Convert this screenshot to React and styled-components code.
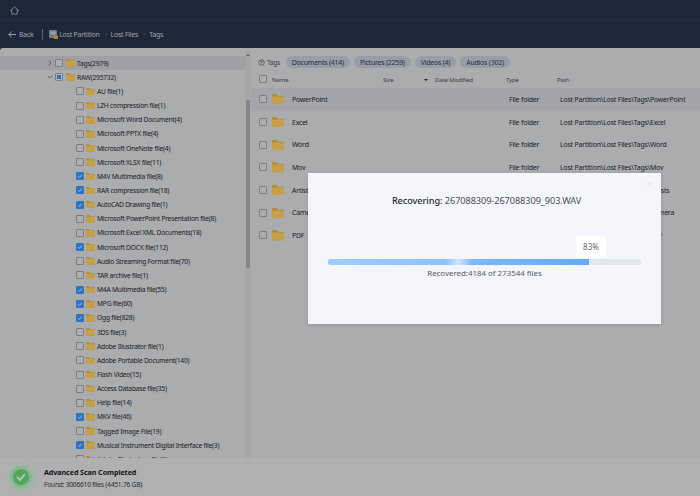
import React from "react";
import styled, { createGlobalStyle } from "styled-components";
import { ChevronDown, ChevronRight, X } from "lucide-react";

const GlobalStyle = createGlobalStyle`
  html, body {
    margin: 0;
    padding: 0;
  }
  body {
    font-family: "Noto Sans", "Open Sans", sans-serif;
    color: #23262e;
    background: #d6d7da;
  }
`;

const Page = styled.div`
  position: relative;
  display: flex;
  flex-direction: column;
  width: 700px;
  height: 496px;
  overflow: hidden;
  background: #263148;
`;

const TopBar = styled.div`
  display: flex;
  align-items: center;
  height: 20px;
  padding-left: 10px;
  border-bottom: 1px solid #2e3a54;
`;

const Crumbs = styled.div`
  display: flex;
  align-items: center;
  height: 27px;
  padding-left: 8px;
  font-size: 7px;
  letter-spacing: -0.25px;
  color: #c4c8d0;
`;

const Back = styled.span`
  display: flex;
  align-items: center;
  gap: 3px;
  padding-right: 8px;
  margin-right: 6px;
  border-right: 1px solid #747c8e;
  height: 11px;
`;

const Crumb = styled.span`
  display: flex;
  align-items: center;
`;

const CrumbArrow = styled.span`
  display: flex;
  padding: 0 2px 0 4px;
  color: #8f96a6;
`;

const Body = styled.div`
  flex: 1;
  display: flex;
  min-height: 0;
  background: #d6d7da;
  border-radius: 3px 0 0 0;
  overflow: hidden;
`;

const Tree = styled.div`
  width: 246px;
  padding-top: 8px;
  overflow: hidden;
  font-size: 6.7px;
  letter-spacing: -0.23px;
`;

const ScrollTrack = styled.div`
  display: flex;
  flex-direction: column;
  align-items: center;
  width: 4px;
  padding-top: 6px;
  background: #cfcfd0;
`;

const ScrollArrow = styled.span`
  width: 0;
  height: 0;
  border-left: 2px solid transparent;
  border-right: 2px solid transparent;
  border-bottom: 2px solid #77777a;
  margin-bottom: 44px;
`;

const ScrollThumb = styled.div`
  width: 100%;
  height: 168px;
  background: #a8a8aa;
`;

const TreeRow = styled.div`
  display: flex;
  align-items: center;
  height: 14.17px;
  padding-left: ${(p) => p.$indent}px;
  background: ${(p) => (p.$active ? "#c7c9cf" : "transparent")};
  white-space: nowrap;
`;

const Caret = styled.span`
  display: flex;
  width: 9px;
  color: #4a4a4c;
`;

const Box = styled.span`
  flex: none;
  display: flex;
  align-items: center;
  justify-content: center;
  box-sizing: border-box;
  width: 8px;
  height: 8px;
  border-radius: 1px;
  border: 1px solid ${(p) => (p.$checked ? "#3890f4" : "#9e9e9f")};
  background: ${(p) => (p.$checked ? "#3890f4" : "#d9dadc")};
`;

const PartialMark = styled.span`
  width: 4px;
  height: 4px;
  background: #3890f4;
`;

const TreeFolder = styled.span`
  display: flex;
  margin: 0 2px 0 ${(p) => p.$left}px;
`;

const Main = styled.div`
  flex: 1;
  margin-left: 1px;
  min-width: 0;
  font-size: 6.9px;
  letter-spacing: -0.17px;
`;

const TagBar = styled.div`
  display: flex;
  align-items: center;
  height: 16px;
  margin-top: 6px;
  padding-left: 7px;
  gap: 4px;
`;

const TagTitle = styled.span`
  display: flex;
  align-items: center;
  gap: 2px;
  margin-right: 2px;
  font-size: 6.3px;
  color: #474b55;
`;

const Pill = styled.span`
  display: flex;
  align-items: center;
  height: 12px;
  padding: 0 6px;
  border-radius: 6px;
  background: #c1c4d2;
  color: #343844;
  font-size: 7px;
  letter-spacing: -0.24px;
`;

const Grid = styled.div`
  display: grid;
  grid-template-columns: 13px 111px 41px 82px 51px 1fr;
  align-items: center;
  height: ${(p) => p.$height}px;
  padding-left: 8px;
  background: ${(p) => (p.$active ? "#cdcfd6" : "transparent")};
  white-space: nowrap;
`;

const HeadCell = styled.span`
  font-size: 6.1px;
  letter-spacing: -0.2px;
  color: #4d5059;
`;

const SortCell = styled(HeadCell)`
  display: flex;
  align-items: center;
  gap: 7px;
`;

const SortArrow = styled.span`
  width: 0;
  height: 0;
  margin-top: 2px;
  border-left: 2px solid transparent;
  border-right: 2px solid transparent;
  border-top: 2px solid #2b2b2b;
`;

const NameCell = styled.span`
  display: flex;
  align-items: center;
  gap: 8px;
`;

const TypeCell = styled.span`
  margin-left: 3px;
`;

const PathCell = styled.span`
  margin-left: 3px;
`;

const Footer = styled.div`
  display: flex;
  align-items: center;
  gap: 9px;
  height: 38px;
  flex: none;
  padding-left: 7px;
  background: #dcdddd;
`;

const FooterText = styled.div`
  display: flex;
  flex-direction: column;
  gap: 3px;
  padding-top: 1px;
`;

const FooterTitle = styled.div`
  font-size: 7.2px;
  font-weight: 700;
  letter-spacing: -0.1px;
  color: #14161c;
`;

const FooterSub = styled.div`
  font-size: 6.6px;
  letter-spacing: -0.2px;
  color: #343844;
`;

const Overlay = styled.div`
  position: absolute;
  inset: 0;
  background: rgba(0, 0, 0, 0.2);
`;

const Modal = styled.div`
  position: absolute;
  left: 308px;
  top: 173px;
  display: flex;
  flex-direction: column;
  align-items: center;
  box-sizing: border-box;
  width: 353px;
  height: 151px;
  padding: 21px 20px 0;
  background: #f5f6fb;
  box-shadow: 0 1px 4px rgba(0, 0, 0, 0.12);
`;

const CloseButton = styled.span`
  position: absolute;
  top: 6px;
  right: 7px;
  display: flex;
  color: #c3c5cc;
`;

const ModalTitle = styled.div`
  margin-left: 4px;
  font-size: 9.2px;
  line-height: 14px;
  letter-spacing: -0.08px;
  color: #4a4d57;
  white-space: nowrap;
`;

const ModalLabel = styled.span`
  font-weight: 500;
  color: #26282f;
`;

const ProgressWrap = styled.div`
  position: relative;
  width: 100%;
  margin-top: 51px;
`;

const Bubble = styled.div`
  position: absolute;
  right: 35px;
  bottom: 8px;
  display: flex;
  align-items: center;
  justify-content: center;
  width: 30px;
  height: 21px;
  border-radius: 2px;
  background: #fff;
  font-size: 8px;
  color: #5f6575;
  &::after {
    content: "";
    position: absolute;
    left: 12px;
    bottom: -3px;
    border-left: 3px solid transparent;
    border-right: 3px solid transparent;
    border-top: 3px solid #fff;
  }
`;

const ProgressTrack = styled.div`
  height: 6px;
  border-radius: 2px;
  background: #e4e6f2;
  overflow: hidden;
`;

const ProgressFill = styled.div`
  height: 100%;
  border-radius: 2px 0 0 2px;
  background: linear-gradient(
    90deg,
    #a0cdfc 0%,
    #8cc2fb 45%,
    #d2e6fd 50%,
    #7cb9fa 55%,
    #63aaf9 100%
  );
`;

const ModalCount = styled.div`
  margin-top: 2px;
  font-size: 7.9px;
  line-height: 12px;
  color: #555964;
`;

const treeItems = [
  ["AU file(1)", false],
  ["LZH compression file(1)", false],
  ["Microsoft Word Document(4)", false],
  ["Microsoft PPTX file(4)", false],
  ["Microsoft OneNote file(4)", false],
  ["Microsoft XLSX file(11)", false],
  ["M4V Multimedia file(8)", true],
  ["RAR compression file(18)", true],
  ["AutoCAD Drawing file(1)", true],
  ["Microsoft PowerPoint Presentation file(8)", false],
  ["Microsoft Excel XML Documents(18)", false],
  ["Microsoft DOCX file(112)", true],
  ["Audio Streaming Format file(70)", false],
  ["TAR archive file(1)", false],
  ["M4A Multimedia file(55)", true],
  ["MPG file(60)", true],
  ["Ogg file(828)", true],
  ["3DS file(3)", false],
  ["Adobe Illustrator file(1)", false],
  ["Adobe Portable Document(140)", false],
  ["Flash Video(15)", false],
  ["Access Database file(35)", false],
  ["Help file(14)", false],
  ["MKV file(46)", true],
  ["Tagged Image File(19)", false],
  ["Musical Instrument Digital Interface file(3)", true],
  ["Adobe Photoshop file(1)", false],
];

const folders = [
  ["PowerPoint", "Lost Partition\\Lost Files\\Tags\\PowerPoint"],
  ["Excel", "Lost Partition\\Lost Files\\Tags\\Excel"],
  ["Word", "Lost Partition\\Lost Files\\Tags\\Word"],
  ["Mov", "Lost Partition\\Lost Files\\Tags\\Mov"],
  ["Artists", "Lost Partition\\Lost Files\\Tags\\Artists"],
  ["Camera", "Lost Partition\\Lost Files\\Tags\\Camera"],
  ["PDF", "Lost Partition\\Lost Files\\Tags\\PDF"],
];

const FolderIcon = ({ size }) => (
  <svg width={size} height={size * 0.85} viewBox="0 0 20 17">
    <path d="M0 1.5C0 .7.7 0 1.5 0H7l2.5 3H20v14H0z" fill="#e0ae3c" />
    <path d="M0 4h20v13H0z" fill="#f5c95d" />
  </svg>
);

const CheckIcon = () => (
  <svg width="6" height="6" viewBox="0 0 12 12">
    <path d="M2 6.2 5 9l5-6" fill="none" stroke="#e8edf5" strokeWidth="1.8" />
  </svg>
);

const HomeIcon = () => (
  <svg width="9" height="9" viewBox="0 0 20 20" fill="none" stroke="#d6d9e0" strokeWidth="1.5">
    <path d="M1 10 10 2l9 8h-3v8H4v-8z" strokeLinejoin="round" />
  </svg>
);

const BackArrow = () => (
  <svg width="8" height="7" viewBox="0 0 16 14" fill="none" stroke="#d6d9e0" strokeWidth="1.8">
    <path d="M16 7H2M7.500 1 1.500 7l6 6" />
  </svg>
);

const DriveIcon = () => (
  <svg width="9" height="9" viewBox="0 0 18 18">
    <rect x="0" y="0" width="16" height="16" rx="1.500" fill="#929cb0" />
    <rect x="3" y="3" width="10" height="6" fill="#c4c9d4" />
    <rect x="10" y="11" width="8" height="7" rx="1" fill="#e6ab2c" />
  </svg>
);

const TagIcon = () => (
  <svg width="7" height="7" viewBox="0 0 14 14" fill="none" stroke="#474b55" strokeWidth="1.300">
    <circle cx="7" cy="7" r="5.500" />
    <path d="M5 5h4L6 9.500" />
  </svg>
);

const ScanDoneIcon = () => (
  <svg width="28" height="28" viewBox="0 0 28 28">
    <circle cx="14" cy="14" r="14" fill="#c6e4cb" />
    <circle cx="14" cy="14" r="11" fill="#b0e0ba" />
    <circle cx="14" cy="14" r="8" fill="#65d273" />
    <path d="M10 14l3 3 5-6" fill="none" stroke="#f2f2f2" strokeWidth="1.800" />
  </svg>
);

const CrumbSep = () => (
  <CrumbArrow>
    <ChevronRight size={5} strokeWidth={2} />
  </CrumbArrow>
);

const App = () => {
  return (
    <Page>
      <GlobalStyle />
      <TopBar>
        <HomeIcon />
      </TopBar>
      <Crumbs>
        <Back>
          <BackArrow />
          Back
        </Back>
        <Crumb>
          <DriveIcon />
          &nbsp;Lost Partition
        </Crumb>
        <CrumbSep />
        <Crumb>Lost Files</Crumb>
        <CrumbSep />
        <Crumb>Tags</Crumb>
      </Crumbs>
      <Body>
        <Tree>
          <TreeRow $indent={46} $active>
            <Caret>
              <ChevronRight size={8} />
            </Caret>
            <Box />
            <TreeFolder $left={3}>
              <FolderIcon size={9} />
            </TreeFolder>
            Tags(2979)
          </TreeRow>
          <TreeRow $indent={46}>
            <Caret>
              <ChevronDown size={8} />
            </Caret>
            <Box>
              <PartialMark />
            </Box>
            <TreeFolder $left={3}>
              <FolderIcon size={9} />
            </TreeFolder>
            RAW(295732)
          </TreeRow>
          {treeItems.map(([label, checked]) => (
            <TreeRow key={label} $indent={76}>
              <Box $checked={checked}>{checked && <CheckIcon />}</Box>
              <TreeFolder $left={2}>
                <FolderIcon size={9} />
              </TreeFolder>
              {label}
            </TreeRow>
          ))}
        </Tree>
        <ScrollTrack>
          <ScrollArrow />
          <ScrollThumb />
        </ScrollTrack>
        <Main>
          <TagBar>
            <TagTitle>
              <TagIcon />
              Tags
            </TagTitle>
            <Pill>Documents (414)</Pill>
            <Pill>Pictures (2259)</Pill>
            <Pill>Videos (4)</Pill>
            <Pill>Audios (302)</Pill>
          </TagBar>
          <Grid $height={18}>
            <Box />
            <HeadCell>Name</HeadCell>
            <HeadCell>Size</HeadCell>
            <SortCell>
              <SortArrow />
              Date Modified
            </SortCell>
            <HeadCell>Type</HeadCell>
            <HeadCell>Path</HeadCell>
          </Grid>
          {folders.map(([name, path], i) => (
            <Grid key={name} $height={22.7} $active={i === 0}>
              <Box />
              <NameCell>
                <FolderIcon size={12} />
                {name}
              </NameCell>
              <span />
              <span />
              <TypeCell>File folder</TypeCell>
              <PathCell>{path}</PathCell>
            </Grid>
          ))}
        </Main>
      </Body>
      <Footer>
        <ScanDoneIcon />
        <FooterText>
          <FooterTitle>Advanced Scan Completed</FooterTitle>
          <FooterSub>Found: 3006610 files (4451.76 GB)</FooterSub>
        </FooterText>
      </Footer>
      <Overlay>
        <Modal>
          <CloseButton>
            <X size={9} strokeWidth={1} />
          </CloseButton>
          <ModalTitle>
            <ModalLabel>Recovering:</ModalLabel> 267088309-267088309_903.WAV
          </ModalTitle>
          <ProgressWrap>
            <Bubble>83%</Bubble>
            <ProgressTrack>
              <ProgressFill style={{ width: "83.500%" }} />
            </ProgressTrack>
          </ProgressWrap>
          <ModalCount>Recovered:4184 of 273544 files</ModalCount>
        </Modal>
      </Overlay>
    </Page>
  );
};

export default App;
